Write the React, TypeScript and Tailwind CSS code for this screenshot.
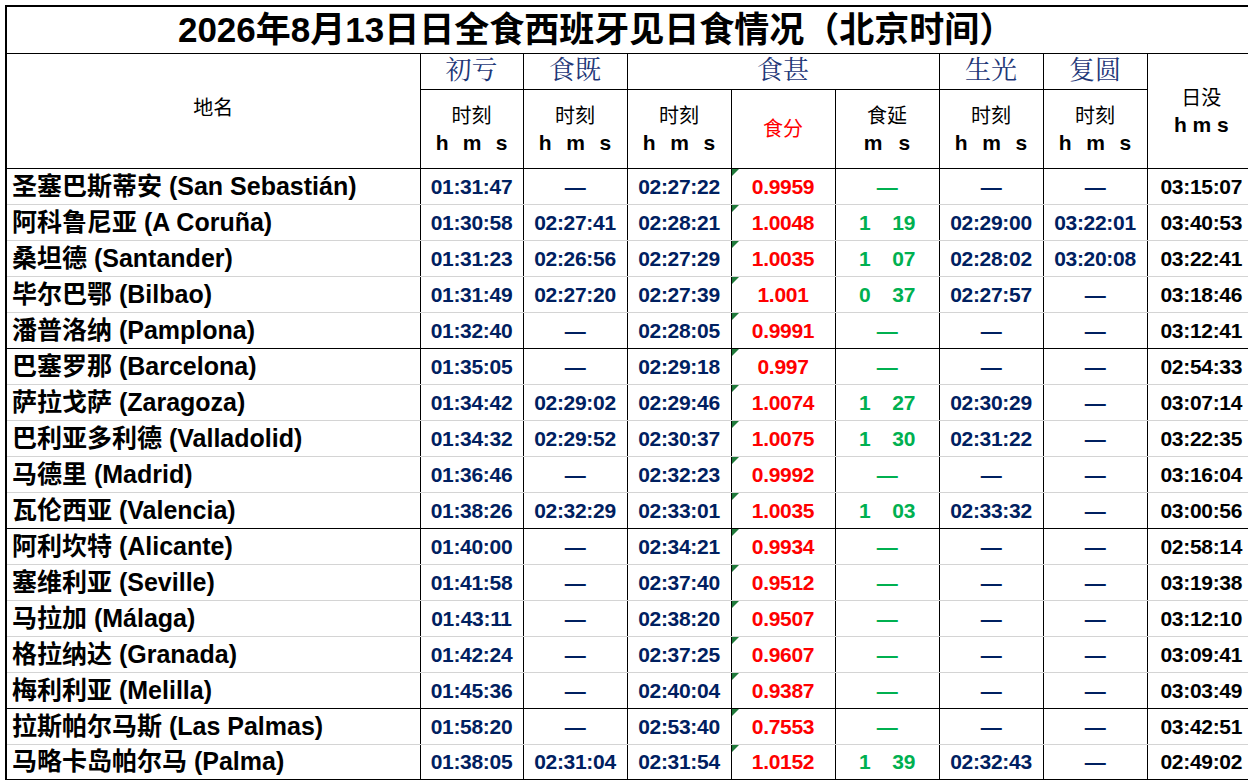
const rows: [string, string, string, string, string, string, string, string, string, boolean][] = [
  ["圣塞巴斯蒂安 (San Sebastián)", "01:31:47", "—", "02:27:22", "0.9959", "", "—", "—", "03:15:07", false],
  ["阿科鲁尼亚 (A Coruña)", "01:30:58", "02:27:41", "02:28:21", "1.0048", "1|19", "02:29:00", "03:22:01", "03:40:53", false],
  ["桑坦德 (Santander)", "01:31:23", "02:26:56", "02:27:29", "1.0035", "1|07", "02:28:02", "03:20:08", "03:22:41", false],
  ["毕尔巴鄂 (Bilbao)", "01:31:49", "02:27:20", "02:27:39", "1.001", "0|37", "02:27:57", "—", "03:18:46", false],
  ["潘普洛纳 (Pamplona)", "01:32:40", "—", "02:28:05", "0.9991", "", "—", "—", "03:12:41", true],
  ["巴塞罗那 (Barcelona)", "01:35:05", "—", "02:29:18", "0.997", "", "—", "—", "02:54:33", false],
  ["萨拉戈萨 (Zaragoza)", "01:34:42", "02:29:02", "02:29:46", "1.0074", "1|27", "02:30:29", "—", "03:07:14", false],
  ["巴利亚多利德 (Valladolid)", "01:34:32", "02:29:52", "02:30:37", "1.0075", "1|30", "02:31:22", "—", "03:22:35", false],
  ["马德里 (Madrid)", "01:36:46", "—", "02:32:23", "0.9992", "", "—", "—", "03:16:04", false],
  ["瓦伦西亚 (Valencia)", "01:38:26", "02:32:29", "02:33:01", "1.0035", "1|03", "02:33:32", "—", "03:00:56", true],
  ["阿利坎特 (Alicante)", "01:40:00", "—", "02:34:21", "0.9934", "", "—", "—", "02:58:14", false],
  ["塞维利亚 (Seville)", "01:41:58", "—", "02:37:40", "0.9512", "", "—", "—", "03:19:38", false],
  ["马拉加 (Málaga)", "01:43:11", "—", "02:38:20", "0.9507", "", "—", "—", "03:12:10", false],
  ["格拉纳达 (Granada)", "01:42:24", "—", "02:37:25", "0.9607", "", "—", "—", "03:09:41", false],
  ["梅利利亚 (Melilla)", "01:45:36", "—", "02:40:04", "0.9387", "", "—", "—", "03:03:49", true],
  ["拉斯帕尔马斯 (Las Palmas)", "01:58:20", "—", "02:53:40", "0.7553", "", "—", "—", "03:42:51", false],
  ["马略卡岛帕尔马 (Palma)", "01:38:05", "02:31:04", "02:31:54", "1.0152", "1|39", "02:32:43", "—", "02:49:02", false],
];

const sans = { fontFamily: '"Liberation Sans", Arial, "Noto Sans CJK SC", sans-serif' };
const serif = { fontFamily: '"Liberation Serif", "Noto Serif CJK SC", "Noto Sans CJK SC", serif' };

function HMS() {
  return (
    <div className="flex justify-around px-2 font-bold text-[21px] leading-[26px]" style={sans}>
      <span>h</span><span>m</span><span>s</span>
    </div>
  );
}

export default function App() {
  return (
    <div className="w-[1248px] h-[780px] bg-white overflow-hidden pl-[5px] pt-[5px]" style={sans}>
      <table className="border-collapse table-fixed w-[1250px] border-2 border-black leading-none">
        <colgroup>
          <col className="w-[414px]" />
          <col className="w-[103px]" />
          <col className="w-[104px]" />
          <col className="w-[104px]" />
          <col className="w-[104px]" />
          <col className="w-[104px]" />
          <col className="w-[104px]" />
          <col className="w-[104px]" />
          <col className="w-[109px]" />
        </colgroup>
        <tbody>
          <tr className="h-[47px]">
            <td colSpan={9} className="p-0 border border-black text-center font-bold text-[35px] text-black pr-[70px]">
              2026年8月13日日全食西班牙见日食情况（北京时间）
            </td>
          </tr>
          <tr className="h-[36px]">
            <td rowSpan={2} className="p-0 border border-black text-center text-[20px] pb-[8px]" style={{ fontFamily: '"Noto Sans CJK SC", sans-serif' }}>地名</td>
            <td className="p-0 border border-black text-center text-[26px] text-[#1f3878]" style={serif}>初亏</td>
            <td className="p-0 border border-black text-center text-[26px] text-[#1f3878]" style={serif}>食既</td>
            <td colSpan={3} className="p-0 border border-black text-center text-[26px] text-[#1f3878]" style={serif}>食甚</td>
            <td className="p-0 border border-black text-center text-[26px] text-[#1f3878]" style={serif}>生光</td>
            <td className="p-0 border border-black text-center text-[26px] text-[#1f3878]" style={serif}>复圆</td>
            <td rowSpan={2} className="p-0 border border-black text-center align-middle">
              <div className="text-[20px] leading-[28px]">日没</div>
              <div className="font-bold text-[21px] leading-[26px]">h m s</div>
            </td>
          </tr>
          <tr className="h-[79px]">
            {[0, 1, 2].map((i) => (
              <td key={i} className="p-0 border border-black text-center">
                <div className="text-[20px] leading-[28px]">时刻</div>
                <HMS />
              </td>
            ))}
            <td className="p-0 border border-black text-center text-[20px] text-[#ff0000]">食分</td>
            <td className="p-0 border border-black text-center">
              <div className="text-[20px] leading-[28px]">食延</div>
              <div className="font-bold text-[21px] leading-[26px] flex justify-center gap-4"><span>m</span><span>s</span></div>
            </td>
            {[0, 1].map((i) => (
              <td key={i} className="p-0 border border-black text-center">
                <div className="text-[20px] leading-[28px]">时刻</div>
                <HMS />
              </td>
            ))}
          </tr>
          {rows.map((r, idx) => {
            const bottom = r[9] ? "border-b-black" : "border-b-[#d4d4d4]";
            const cell = `p-0 border-x border-x-black border-b ${bottom} text-center font-bold text-[21px] whitespace-nowrap tracking-[-0.3px]`;
            return (
              <tr key={idx} className="h-[36px]">
                <td className={`p-0 border-x border-x-black border-b ${bottom} font-bold text-[25px] pl-[5px] whitespace-nowrap text-black`}>{r[0]}</td>
                <td className={`${cell} text-[#002060]`}>{r[1]}</td>
                <td className={`${cell} text-[#002060]`}>{r[2]}</td>
                <td className={`${cell} text-[#002060]`}>{r[3]}</td>
                <td className={`${cell} text-[#ff0000] relative`}>
                  <span className="absolute left-0 top-0 w-0 h-0 border-t-[7px] border-t-[#1f7a3a] border-r-[7px] border-r-transparent" />
                  {r[4]}
                </td>
                <td className={`${cell} text-[#00b050]`}>
                  {r[5] ? (
                    <span className="inline-flex gap-[22px]"><span>{r[5].split("|")[0]}</span><span>{r[5].split("|")[1]}</span></span>
                  ) : "—"}
                </td>
                <td className={`${cell} text-[#002060]`}>{r[6]}</td>
                <td className={`${cell} text-[#002060]`}>{r[7]}</td>
                <td className={`${cell} text-black`}>{r[8]}</td>
              </tr>
            );
          })}
        </tbody>
      </table>
    </div>
  );
}
